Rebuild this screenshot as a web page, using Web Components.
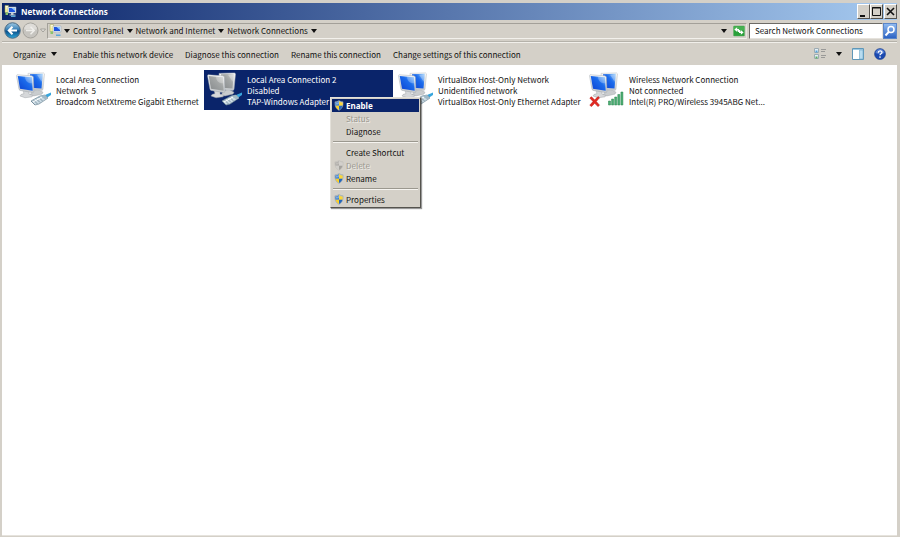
<!DOCTYPE html>
<html lang="en">
<head>
<meta charset="utf-8">
<title>Network Connections</title>
<style>
  html, body { margin: 0; height: 100%; }
  body {
    --face: #d4d0c8; --navy: #0a246a;
    background: var(--face); color: #111;
    font: 8px/11px "Noto Sans CJK SC", "Noto Sans", sans-serif;
  }
</style>
</head>
<body>
<network-window></network-window>

<script>
const RESET = `
  button { font: inherit; color: inherit; background: none; border: 0; padding: 0; margin: 0; white-space: nowrap; }
  svg { display: block; }
  * { box-sizing: border-box; }
`;
const define = (name, html, setup) => {
  const tpl = document.createElement('template');
  tpl.innerHTML = html;
  customElements.define(name, class extends HTMLElement {
    connectedCallback() {
      if (this.shadowRoot) return;
      const root = this.attachShadow({ mode: 'open' });
      root.append(tpl.content.cloneNode(true));
      if (setup) setup(this, root);
    }
  });
};

define('down-arrow', `
  <style>:host { display: block; width: 6px; } svg { display: block; }</style>
  <svg width="6" height="4" viewBox="0 0 6 4"><path d="M0 0h6L3 4z" fill="#111"/></svg>`);

define('shield-icon', `
  <style>:host { display: block; } :host([off]) { filter: grayscale(1); opacity: .4; } svg { display: block; }</style>
  <svg width="10" height="11" viewBox="0 0 22 24">
    <path d="M11 1C8 3 5 4 2 4c-1 9 2 15 9 19 7-4 10-10 9-19-3 0-6-1-9-3z" fill="#b4c0ca" stroke="#8b98a4"/>
    <path d="M11 2.500C8 4.500 6 5 3 5.500c-.3 2-.3 4.500.4 7H11z" fill="#3a7fd0"/>
    <path d="M11 2.500c3 2 5 2.500 8 3 .3 2 .3 4.500-.4 7H11z" fill="#fbd638"/>
    <path d="M11 12.500H3.500C4.500 17 7.500 20 11 22z" fill="#f9cf2b"/>
    <path d="M11 12.500h7.500c-1 4.500-3.500 7.500-7.500 9.500z" fill="#2467bd"/>
    <path d="M4 7c2 0 5-1 7-3v4c-2 2-5 2-7 2z" fill="#fff" opacity=".35"/>
  </svg>`);

define('monitor-pair', `
  <style>
    :host { display: block; --a: #0a3fd0; --b: #1c6cec; --c: #9fd2fb; }
    :host([off]) { --a: #85898b; --b: #a3a6a6; --c: #d4d5d3; }
    svg { display: block; }
  </style>
  <svg width="36" height="36" viewBox="0 0 36 36">
    <defs>
      <linearGradient id="s" x1="0" y1="1" x2="1" y2="0">
        <stop offset="0" style="stop-color:var(--a)"/><stop offset=".6" style="stop-color:var(--b)"/><stop offset="1" style="stop-color:var(--c)"/>
      </linearGradient>
      <linearGradient id="f" x1="0" y1="0" x2="0" y2="1"><stop offset="0" stop-color="#fbfbfb"/><stop offset="1" stop-color="#c3c7ca"/></linearGradient>
    </defs>
    <g transform="translate(0 1) scale(1 .92)">
      <path d="M17 20l5-1 5 3-1 2-8 2-4-1z" fill="#c9ccce" stroke="#a0a5a8" stroke-width=".5"/>
      <path d="M12 1.500L27.500 1l1 1L27 19l-1 1L13 19z" fill="url(#f)" stroke="#b5babe" stroke-width=".5"/>
      <path d="M14 2.500l12.700-.5L25.500 18l-10.500-1z" fill="url(#s)"/>
      <path d="M21 3l5.500-.5-.8 8z" fill="#fff" opacity=".3"/>
      <path d="M7 20l6 1v3l4 1.500-1 1.500-7 1-5-2 1-1.500 3-1z" fill="#d6d8da" stroke="#9ca1a5" stroke-width=".5"/>
      <path d="M1 3l15 1.200 1.300 1L18 21.500l-1.200 1L4 20 3 19 .5 4z" fill="url(#f)" stroke="#a2a9ae" stroke-width=".5"/>
      <path d="M1.700 4.300l14.300 1.300.7 14.900L4 18.300z" fill="url(#s)"/>
      <path d="M9 5l7 .7.4 6.500C12.500 13 9 10 9 5z" fill="#fff" opacity=".25"/>
    </g>
    <g class="plug">
      <path d="M29 24l6-2.500v2.500L30.500 27z" fill="#38a5dc"/>
      <path d="M15 30l9-5 5-1 3 3-9 6-4 1z" fill="#cbdbe4" stroke="#718998" stroke-width=".7"/>
      <path d="M15 30l4 4M17.500 29l4 4M20 27.500l4 4M22.500 26l4 4" stroke="#6e8796" stroke-width=".8"/>
      <path d="M24 25l5-1 3 3-2.500 1.500z" fill="#9fb8c6"/>
      <path d="M17 31l9-5" stroke="#fff" stroke-width="1"/>
    </g>
    <g class="wifi" stroke="#27804b" stroke-width=".5" fill="#4caf74">
      <path d="M19.500 30h2v4h-2zM22.600 28h2v6h-2zM25.700 26h2v8h-2zM28.800 23.500h2V34h-2zM31.900 21h2v13h-2z"/>
      <path d="M.8 27l1.700-1.300 3.200 3.300L9 25.500l1.500 1.300-3.200 3.700 3.200 3.700L9 35.600 5.700 32.300 2.500 35.600.8 34.200 4 30.500z" fill="#e22a22" stroke="#b50f0c"/>
    </g>
  </svg>`, (host, root) => root.querySelector(host.hasAttribute('wireless') ? '.plug' : '.wifi').remove());

define('network-glyph', `
  <style>:host { display: block; } svg { display: block; }</style>
  <svg width="13" height="13" viewBox="0 0 26 26">
    <path d="M2 1h7v14H2z" fill="#f3ec9a" stroke="#a3a468"/><path d="M3.500 3h4M3.500 6h4" stroke="#fff" stroke-width="1.500"/>
    <path d="M8 4h16v12H8z" fill="#dfe9f2" stroke="#94a6b4"/><path d="M10 6h12v8H10z" fill="#1f55df"/>
    <path d="M15 6h7v6z" fill="#8cc4ff"/><path d="M14 16h5v3h4v2H11v-2h3z" fill="#c5cdd3"/>
    <path d="M3 15h5v5H3z" fill="#8bc36d"/><path d="M14 21h9v3h-9z" fill="#5aa7d8"/>
  </svg>`);

define('title-bar', `
  <style>${RESET}
    :host { display: flex; align-items: center; height: 17px; padding-left: 2px; gap: 4px;
      background: linear-gradient(90deg, #0a246a, #a6caf0); color: #fff; }
    h1 { flex: 1; margin: 0; font: bold 8px/12px "Noto Sans", sans-serif; }
    .box { display: flex; }
    button { width: 13px; height: 15px; background: var(--face); border: 1px solid; border-color: #fff #55534e #55534e #fff; }
    button:last-child { margin-left: 1px; }
  </style>
  <network-glyph></network-glyph>
  <h1><slot></slot></h1>
  <div class="box">
    <button aria-label="Minimize"><svg width="11" height="13" viewBox="0 0 11 13"><path d="M2 10h5v2H2z" fill="#111"/></svg></button>
    <button aria-label="Maximize"><svg width="11" height="13" viewBox="0 0 11 13"><path d="M1.500 2.500h8v8h-8zM1 3h9" fill="none" stroke="#111"/></svg></button>
    <button aria-label="Close"><svg width="11" height="13" viewBox="0 0 11 13"><path d="M2 3l7 7M9 3l-7 7" stroke="#111" stroke-width="1.600"/></svg></button>
  </div>`);

define('nav-bar', `
  <style>${RESET}
    :host { display: flex; align-items: center; height: 21px; padding-left: 2px; border-bottom: 1px solid #b5b2aa; }
    .hist { display: flex; align-items: center; gap: 1px; width: 43px; }
    .path { flex: 1; display: flex; align-items: center; height: 16px; padding: 0 1px;
      border: 1px solid; border-color: #a3a099 #e9e6e0 #f3f1ec #a3a099; }
    nav { display: flex; align-items: center; flex: 1; gap: 3px; margin-left: 2px; }
    .end { display: flex; align-items: center; gap: 6px; }
    form { display: flex; width: 148px; height: 16px; margin-left: 2px; }
    input { flex: 1; min-width: 0; font: inherit; color: #111; background: #fff; border: 1px solid; border-color: #6d6b66 #e5e2dc #e5e2dc #6d6b66; padding: 0 0 0 5px; outline: 0; border-radius: 0; }
    input::placeholder { color: #111; opacity: 1; }
    form button { width: 14px; background: linear-gradient(#8fbaf0, #2c63c4); border: 1px solid #5b86c8; }
  </style>
  <div class="hist">
    <button aria-label="Back"><svg width="17" height="17" viewBox="0 0 34 34">
      <defs><linearGradient id="g" x1="0" y1="0" x2="0" y2="1"><stop offset="0" stop-color="#9fcbe6"/><stop offset=".48" stop-color="#2f78b0"/><stop offset=".52" stop-color="#0b4c86"/><stop offset="1" stop-color="#2aa7da"/></linearGradient></defs>
      <circle cx="17" cy="17" r="15.500" fill="url(#g)" stroke="#4b6a83" stroke-width="2"/>
      <path d="M26 17H10M17 9.500L9.500 17l7.500 7.500" fill="none" stroke="#fff" stroke-width="4"/></svg></button>
    <button aria-label="Forward"><svg width="17" height="17" viewBox="0 0 34 34">
      <circle cx="17" cy="17" r="15" fill="#c6c4bf" stroke="#a3a19b" stroke-width="2"/><path d="M4 15a13 12 0 0 1 26 0z" fill="#dedcd8"/>
      <path d="M8 17h16M17 9.500l7.500 7.500-7.500 7.500" fill="none" stroke="#efeeeb" stroke-width="3"/></svg></button>
    <button aria-label="Recent pages"><svg width="6" height="5" viewBox="0 0 6 5"><path d="M.5 1h5L3 4z" fill="#e7e5e0" stroke="#8e8c86" stroke-width=".7"/></svg></button>
  </div>
  <div class="path">
    <network-glyph></network-glyph>
    <nav aria-label="Location">
      <button aria-label="Locations"><down-arrow></down-arrow></button>
      <button>Control Panel</button><button aria-label="In Control Panel"><down-arrow></down-arrow></button>
      <button>Network and Internet</button><button aria-label="In Network and Internet"><down-arrow></down-arrow></button>
      <button>Network Connections</button><button aria-label="In Network Connections"><down-arrow></down-arrow></button>
    </nav>
    <div class="end">
      <button aria-label="Previous locations"><down-arrow></down-arrow></button>
      <button aria-label="Refresh"><svg width="12" height="12" viewBox="0 0 26 24">
        <rect x="1" y="1" width="24" height="22" rx="2" fill="#2aa03a" stroke="#69ad6c"/>
        <path d="M1 2h24v9H1z" fill="#62c267" opacity=".5"/>
        <path d="M3 9l6-5v3.500h4V14h-2.500v-3H9v3zM23 15l-6 5v-3.500h-4V10h2.500v3H17v-3z" fill="#fff"/></svg></button>
    </div>
  </div>
  <form onsubmit="return false">
    <input type="text" aria-label="Search" placeholder="Search Network Connections">
    <button aria-label="Search"><svg width="12" height="14" viewBox="0 0 12 14"><circle cx="7" cy="5.500" r="3" fill="none" stroke="#fff" stroke-width="1.500"/><path d="M4.800 7.800L1.500 11.500" stroke="#fff" stroke-width="2"/></svg></button>
  </form>`);

define('command-bar', `
  <style>${RESET}
    :host { display: flex; align-items: center; box-sizing: border-box; height: 23px; padding: 0 11px; gap: 12px; border-top: 1px solid #f1efea; }
    .menu { display: flex; align-items: center; gap: 5px; margin-right: 4px; }
    .tools { display: flex; align-items: center; gap: 10px; margin-left: auto; }
  </style>
  <button class="menu">Organize <down-arrow></down-arrow></button>
  <button>Enable this network device</button>
  <button>Diagnose this connection</button>
  <button>Rename this connection</button>
  <button>Change settings of this connection</button>
  <div class="tools">
    <button aria-label="Change view"><svg width="12" height="12" viewBox="0 0 12 12">
      <path d="M.5.500h4v4h-4zM.5 6.500h4v4h-4z" fill="#e3eef4" stroke="#9cabb3"/><path d="M1.500 2.500h2v2h-2z" fill="#5aa5d8"/><path d="M1.500 8.500h2v2h-2z" fill="#5fae62"/>
      <path d="M7 1.500h5M7 3.500h4M7 7.500h5M7 9.500h4" stroke="#9a9a98"/></svg></button>
    <button aria-label="More view options"><down-arrow></down-arrow></button>
    <button aria-label="Show the preview pane"><svg width="12" height="12" viewBox="0 0 12 12">
      <path d="M.5.500h11v11H.5z" fill="#fff" stroke="#5f97b8"/><path d="M1 1h10v1H1z" fill="#9ecbe4"/><path d="M7.500 2H11v9H7.500z" fill="#b8dcf0" stroke="#6fa9c9" stroke-width=".6"/></svg></button>
    <button aria-label="Help"><svg width="12" height="12" viewBox="0 0 24 24">
      <circle cx="12" cy="12" r="11" fill="#1b49b0" stroke="#173a86"/><path d="M3 10a9 8 0 0 1 18 0c-5 3-13 3-18 0z" fill="#6b93df" opacity=".7"/>
      <path d="M8.500 9.500c0-5 7.500-5 7.500-.8 0 3-4 2.800-4 6" fill="none" stroke="#fff" stroke-width="2.600"/><circle cx="12" cy="18" r="1.700" fill="#fff"/></svg></button>
  </div>`);

define('connection-item', `
  <style>${RESET}
    :host { display: block; position: relative; }
    .tile { display: flex; align-items: flex-start; gap: 4px; width: 100%; height: 40px; padding: 0 0 0 3px; text-align: left; }
    monitor-pair { margin-top: 1px; }
    .text { padding-top: 4px; }
    :host([selected]) .tile { background: var(--navy); color: #fff; }
    ::slotted(span) { display: block; white-space: nowrap; }
    ::slotted(context-menu) { position: absolute; left: 126px; top: 27px; z-index: 1; }
  </style>
  <button class="tile">
    <monitor-pair></monitor-pair>
    <span class="text"><slot name="name"></slot><slot name="state"></slot><slot name="device"></slot></span>
  </button>
  <slot></slot>`, (host, root) => {
    for (const a of ['off', 'wireless']) if (host.hasAttribute(a)) {
      const icon = document.createElement('monitor-pair');
      icon.setAttribute(a, '');
      root.querySelector('monitor-pair').replaceWith(icon);
    }
  });

define('menu-item', `
  <style>${RESET}
    :host { display: block; }
    button { display: grid; grid-template-columns: 10px 1fr; gap: 2px; align-items: center; width: 100%; height: 13px; padding-left: 2px; text-align: left; }
    :host([active]) button { background: var(--navy); color: #fff; font: bold 8px/12px "Noto Sans", sans-serif; }
    button:disabled { color: #9a978f; text-shadow: 1px 1px #efede8; }
    .label { grid-column: 2; }
    :host(:not([shield])) shield-icon { display: none; }
  </style>
  <button role="menuitem"><shield-icon></shield-icon><span class="label"><slot></slot></span></button>`,
  (host, root) => {
    if (host.hasAttribute('disabled')) {
      root.querySelector('button').disabled = true;
      root.querySelector('shield-icon').setAttribute('off', '');
    }
  });

define('context-menu', `
  <style>
    :host { display: block; box-sizing: border-box; width: 91px; padding: 1px; background: var(--face);
      border: 1px solid; border-color: #e4e1da #55534e #55534e #e4e1da; box-shadow: 1px 1px 1px #0006; }
    ::slotted(hr) { height: 2px; margin: 3px 1px; border: 0; border-top: 1px solid #9b988f; background: #f6f4f0; box-sizing: border-box; }
  </style>
  <div role="menu"><slot></slot></div>`);

define('network-window', `
  <style>
    :host { display: flex; flex-direction: column; min-height: 100vh; box-sizing: border-box; padding: 3px 3px 1px 2px; background: var(--face); }
    main { flex: 1; display: grid; grid-template-columns: repeat(auto-fill, 189px); align-content: start; column-gap: 2px; row-gap: 4px;
      padding: 5px 0 0 11px; background: #fff; border-bottom: 1px solid #e6e3dd; }
  </style>
  <title-bar>Network Connections</title-bar>
  <nav-bar></nav-bar>
  <command-bar></command-bar>
  <main>
    <connection-item>
      <span slot="name">Local Area Connection</span><span slot="state">Network&nbsp; 5</span><span slot="device">Broadcom NetXtreme Gigabit Ethernet</span>
    </connection-item>
    <connection-item selected off>
      <span slot="name">Local Area Connection 2</span><span slot="state">Disabled</span><span slot="device">TAP-Windows Adapter</span>
      <context-menu>
        <menu-item active shield>Enable</menu-item>
        <menu-item disabled>Status</menu-item>
        <menu-item>Diagnose</menu-item>
        <hr>
        <menu-item>Create Shortcut</menu-item>
        <menu-item disabled shield>Delete</menu-item>
        <menu-item shield>Rename</menu-item>
        <hr>
        <menu-item shield>Properties</menu-item>
      </context-menu>
    </connection-item>
    <connection-item>
      <span slot="name">VirtualBox Host-Only Network</span><span slot="state">Unidentified network</span><span slot="device">VirtualBox Host-Only Ethernet Adapter</span>
    </connection-item>
    <connection-item wireless>
      <span slot="name">Wireless Network Connection</span><span slot="state">Not connected</span><span slot="device">Intel(R) PRO/Wireless 3945ABG Net...</span>
    </connection-item>
  </main>`);
</script>
</body>
</html>
